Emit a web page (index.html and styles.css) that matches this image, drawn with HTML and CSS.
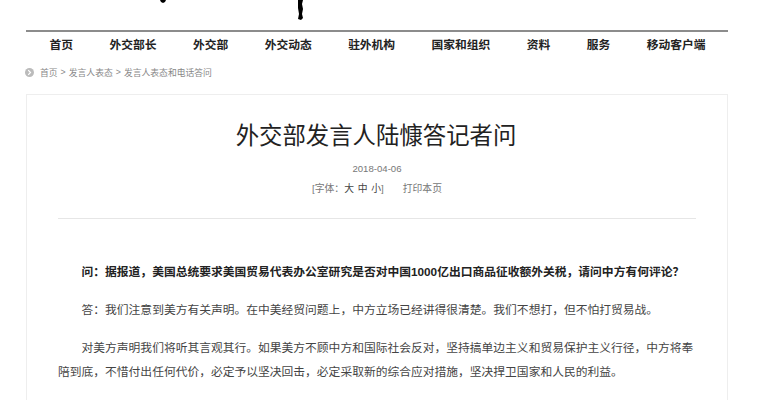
FILE: index.html
```html
<!DOCTYPE html>
<html lang="zh-CN">
<head>
  <meta charset="UTF-8">
  <meta name="viewport" content="width=device-width, initial-scale=1.0">
  <title>外交部发言人陆慷答记者问</title>
  <link rel="stylesheet" href="styles.css">
</head>
<body>
  <!-- bottom edge of the logo, the page is cut off here -->
  <svg class="logo" width="764" height="30" viewBox="0 0 764 30">
    <path d="M160 0h6l-1 2-2 1-2-1z" fill="#000"/>
    <path d="M298 0h5l-1 4 1 5-1 5 1 4-2 2-3-1 1-5-1-6z" fill="#000"/>
  </svg>

  <div class="wrap">
    <ul class="nav">
      <li>首页</li>
      <li>外交部长</li>
      <li>外交部</li>
      <li>外交动态</li>
      <li>驻外机构</li>
      <li>国家和组织</li>
      <li>资料</li>
      <li>服务</li>
      <li>移动客户端</li>
    </ul>

    <div class="crumbs">
      <svg class="crumb-icon" width="9" height="9" viewBox="0 0 9 9">
        <circle cx="4.5" cy="4.5" r="4.5" fill="#bbb"/>
        <path d="M3.2 2.2l2.3 2.3-2.3 2.3" fill="none" stroke="#fff" stroke-width="1.2"/>
      </svg>
      <span>首页</span><i>&gt;</i><span>发言人表态</span><i>&gt;</i><span>发言人表态和电话答问</span>
    </div>

    <div class="article">
      <h1>外交部发言人陆慷答记者问</h1>
      <p class="date">2018-04-06</p>
      <p class="tools"><span>[字体：<b>大 中 小</b>]</span><span>打印本页</span></p>
      <hr>
      <p class="text question">问：据报道，美国总统要求美国贸易代表办公室研究是否对中国1000亿出口商品征收额外关税，请问中方有何评论？</p>
      <p class="text">答：我们注意到美方有关声明。在中美经贸问题上，中方立场已经讲得很清楚。我们不想打，但不怕打贸易战。</p>
      <p class="text">对美方声明我们将听其言观其行。如果美方不顾中方和国际社会反对，坚持搞单边主义和贸易保护主义行径，中方将奉陪到底，不惜付出任何代价，必定予以坚决回击，必定采取新的综合应对措施，坚决捍卫国家和人民的利益。</p>
    </div>
  </div>
</body>
</html>
```

FILE: styles.css
```css
* { margin: 0; padding: 0; box-sizing: border-box; }

html, body { height: 400px; overflow: hidden; }

body {
  background: #fff;
  color: #444;
  font-family: "Liberation Sans", "Noto Sans CJK SC", sans-serif;
}

.logo { display: block; }

.wrap { margin: 0 36px 0 26px; }

.nav {
  display: flex;
  justify-content: space-between;
  list-style: none;
  border-top: 2px solid #8c8c8c;
  padding: 0 22.5px 0 23.5px;
  height: 33px;
  line-height: 26px;
  font-size: 11.75px;
  font-weight: bold;
  color: #222;
}

.crumbs {
  display: flex;
  align-items: center;
  height: 18px;
  margin-left: -1px;
  font-size: 8.8px;
  color: #888;
}
.crumb-icon { margin-right: 6px; }
.crumbs i { font-style: normal; margin: 0 3px; }

.article {
  margin-top: 13px;
  height: 320px;
  border: 1px solid #eee;
  padding: 0 31px;
  text-align: center;
}

h1 {
  margin-top: 24px;
  margin-left: -2px;
  font-size: 23.4px;
  line-height: 34px;
  font-weight: normal;
  color: #222;
}

.date {
  margin-top: 9px;
  font-size: 9.6px;
  line-height: 14px;
  color: #777;
}

.tools {
  display: flex;
  justify-content: center;
  gap: 19px;
  margin-top: 6px;
  font-size: 9.8px;
  line-height: 14px;
  color: #777;
}
.tools b { font-weight: normal; color: #444; word-spacing: 1px; }

hr {
  border: 0;
  border-top: 1px solid #e6e6e6;
  margin-top: 22px;
  margin-bottom: 41px;
}

.text {
  text-align: left;
  font-size: 11.77px;
  line-height: 24px;
  text-indent: 2em;
  margin-bottom: 14px;
}

.question { font-weight: bold; color: #222; }
```
